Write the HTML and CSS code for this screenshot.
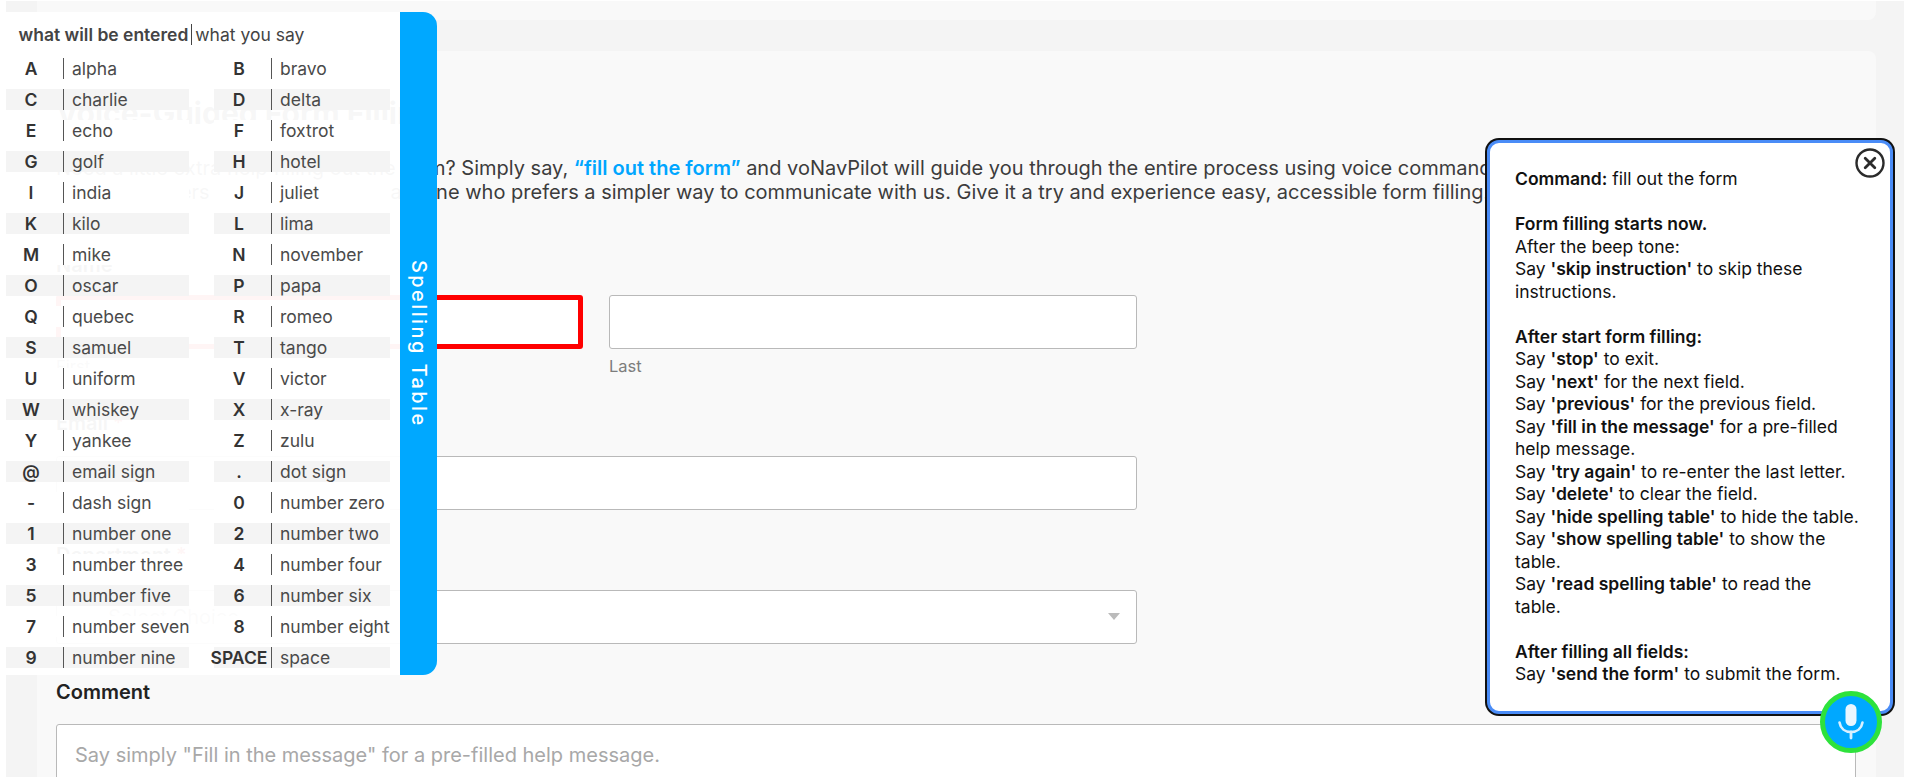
FILE: index.html
```html
<!DOCTYPE html>
<html>
<head>
	<title>Voice-Guided Form Filling</title>
	<meta charset="utf-8">
	<meta name="viewport" content="width=device-width, initial-scale=1">

	<link rel="stylesheet" href="styles.css">
</head>
<body>

	<div class="page">
		<div class="card card-top"></div>

		<div class="card card-form">
			<h2>Voice-Guided Form Filling</h2>
			<p class="intro">
				Need a little extra help filling out the form? Simply say, <a href="#">“fill out the form”</a> and voNavPilot will guide you through the entire process using voice commands.<br>
				Simple for users with disabilities or anyone who prefers a simpler way to communicate with us. Give it a try and experience easy, accessible form filling.
			</p>

			<form>
				<div class="field field-name">
					<label>Name</label>
					<div class="name-row">
						<div>
							<div class="input input-active"></div>
							<small>First</small>
						</div>
						<div>
							<div class="input"></div>
							<small>Last</small>
						</div>
					</div>
				</div>

				<div class="field field-email">
					<label>Email <span class="req">*</span></label>
					<div class="input input-half"></div>
				</div>

				<div class="field field-dept">
					<label>Department <span class="req">*</span></label>
					<div class="input input-half select">
						<span>Select Choice</span>
						<i class="select-arrow"></i>
					</div>
				</div>

				<div class="field field-comment">
					<label>Comment</label>
					<div class="textarea">Say simply "Fill in the message" for a pre-filled help message.</div>
				</div>
			</form>
		</div>
	</div>

	<div class="spelling">
		<div class="spelling-body">
			<div class="spelling-head"><b>what will be entered</b><span>what you say</span></div>
			<div class="spelling-table">
				<div class="row"><b>A</b><span>alpha</span></div>
				<div class="row"><b>B</b><span>bravo</span></div>
				<div class="row alt"><b>C</b><span>charlie</span></div>
				<div class="row alt"><b>D</b><span>delta</span></div>
				<div class="row"><b>E</b><span>echo</span></div>
				<div class="row"><b>F</b><span>foxtrot</span></div>
				<div class="row alt"><b>G</b><span>golf</span></div>
				<div class="row alt"><b>H</b><span>hotel</span></div>
				<div class="row"><b>I</b><span>india</span></div>
				<div class="row"><b>J</b><span>juliet</span></div>
				<div class="row alt"><b>K</b><span>kilo</span></div>
				<div class="row alt"><b>L</b><span>lima</span></div>
				<div class="row"><b>M</b><span>mike</span></div>
				<div class="row"><b>N</b><span>november</span></div>
				<div class="row alt"><b>O</b><span>oscar</span></div>
				<div class="row alt"><b>P</b><span>papa</span></div>
				<div class="row"><b>Q</b><span>quebec</span></div>
				<div class="row"><b>R</b><span>romeo</span></div>
				<div class="row alt"><b>S</b><span>samuel</span></div>
				<div class="row alt"><b>T</b><span>tango</span></div>
				<div class="row"><b>U</b><span>uniform</span></div>
				<div class="row"><b>V</b><span>victor</span></div>
				<div class="row alt"><b>W</b><span>whiskey</span></div>
				<div class="row alt"><b>X</b><span>x-ray</span></div>
				<div class="row"><b>Y</b><span>yankee</span></div>
				<div class="row"><b>Z</b><span>zulu</span></div>
				<div class="row alt"><b>@</b><span>email sign</span></div>
				<div class="row alt"><b>.</b><span>dot sign</span></div>
				<div class="row"><b>-</b><span>dash sign</span></div>
				<div class="row"><b>0</b><span>number zero</span></div>
				<div class="row alt"><b>1</b><span>number one</span></div>
				<div class="row alt"><b>2</b><span>number two</span></div>
				<div class="row"><b>3</b><span>number three</span></div>
				<div class="row"><b>4</b><span>number four</span></div>
				<div class="row alt"><b>5</b><span>number five</span></div>
				<div class="row alt"><b>6</b><span>number six</span></div>
				<div class="row"><b>7</b><span>number seven</span></div>
				<div class="row"><b>8</b><span>number eight</span></div>
				<div class="row alt"><b>9</b><span>number nine</span></div>
				<div class="row alt"><b>SPACE</b><span>space</span></div>
			</div>
		</div>
		<div class="spelling-tab"><span>Spelling Table</span></div>
	</div>

	<div class="popup">
		<button class="popup-close" aria-label="Close">
			<svg width="30" height="30" viewBox="0 0 30 30">
				<circle cx="15" cy="15" r="13.5" fill="none" stroke="#2b2b2b" stroke-width="2.4"/>
				<path d="M10.2 10.2l9.6 9.6M19.8 10.2l-9.6 9.6" fill="none" stroke="#2b2b2b" stroke-width="2.8" stroke-linecap="round"/>
			</svg>
		</button>
		<b>Command:</b> fill out the form<br>
		<br>
		<b>Form filling starts now.</b><br>
		After the beep tone:<br>
		Say <b>'skip instruction'</b> to skip these instructions.<br>
		<br>
		<b>After start form filling:</b><br>
		Say <b>'stop'</b> to exit.<br>
		Say <b>'next'</b> for the next field.<br>
		Say <b>'previous'</b> for the previous field.<br>
		Say <b>'fill in the message'</b> for a pre-filled help message.<br>
		Say <b>'try again'</b> to re-enter the last letter.<br>
		Say <b>'delete'</b> to clear the field.<br>
		Say <b>'hide spelling table'</b> to hide the table.<br>
		Say <b>'show spelling table'</b> to show the table.<br>
		Say <b>'read spelling table'</b> to read the table.<br>
		<br>
		<b>After filling all fields:</b><br>
		Say <b>'send the form'</b> to submit the form.
	</div>

	<button class="mic" aria-label="Microphone">
		<svg width="30" height="36" viewBox="0 0 30 36">
			<rect x="9.5" y="0" width="11" height="22" rx="5.5" fill="#eaf6ff"/>
			<path d="M3.5 18.5c1 6 5.5 9.5 11.5 9.5s10.500-3.500 11.500-9.500" fill="none" stroke="#d9f0ff" stroke-width="2.600" stroke-linecap="round"/>
			<path d="M15 28v6" fill="none" stroke="#d9f0ff" stroke-width="2.800" stroke-linecap="round"/>
		</svg>
	</button>

</body>
</html>
```

FILE: styles.css
```css
*,
*:before,
*:after {
	box-sizing: border-box;
}

html,
body {
	height: 100%;
}

body {
	background-color: #ffffff;
	color: #3c3c3c;
	font-family: "Inter", "Liberation Sans", sans-serif;
	font-size: 17.5px;
	margin: 0;
	overflow: hidden;
}

/* page behind the overlays */

.page {
	background-color: #f4f4f4;
	height: 776px;
	margin: 1px 15px 0 6px;
	overflow: hidden;
	padding: 0 28px 0 31px;
}

.card {
	background-color: #f9f9f9;
	border-radius: 8px;
}

.card-top {
	border-radius: 0 0 8px 8px;
	height: 19px;
	margin-bottom: 31px;
}

.card-form {
	height: 800px;
	padding: 44px 20px 0 19px;
}

h2 {
	color: #333333;
	font-size: 30px;
	font-weight: 700;
	line-height: 36px;
	margin: 0 0 25px;
}

.intro {
	font-size: 20px;
	line-height: 24.3px;
	margin: 0;
	white-space: nowrap;
}

.intro a {
	color: #00a6ff;
	font-weight: 600;
	text-decoration: none;
}

label {
	color: #222222;
	display: block;
	font-size: 20px;
	font-weight: 600;
	line-height: 24px;
}

.req {
	color: #e02020;
}

.field-name {
	margin-top: 48.4px;
}

.name-row {
	column-gap: 26px;
	display: grid;
	grid-template-columns: 527px 528px;
	margin-top: 18px;
}

.input {
	background-color: #ffffff;
	border: 1px solid #b9b9b9;
	border-radius: 3px;
	height: 54px;
}

.input-active {
	border: 5px solid #ff0000;
}

.input-half {
	width: 1081px;
}

small {
	color: #7d7d7d;
	display: block;
	font-size: 16.5px;
	line-height: 20px;
	margin-top: 7px;
}

.field-email {
	margin-top: 35px;
}

.field-email .input {
	margin-top: 21px;
}

.field-dept {
	margin-top: 33px;
}

.field-dept .input {
	margin-top: 23px;
}

.select {
	align-items: center;
	color: #9a9a9a;
	display: flex;
	font-size: 20px;
	justify-content: space-between;
	padding: 0 16px 0 51px;
}

.select-arrow {
	border-left: 6px solid transparent;
	border-right: 6px solid transparent;
	border-top: 7px solid #bbbbbb;
	height: 0;
	width: 0;
}

.field-comment {
	margin-top: 36px;
}

.textarea {
	background-color: #ffffff;
	border: 1px solid #b9b9b9;
	border-radius: 3px;
	color: #a8a8a8;
	font-size: 20px;
	height: 120px;
	line-height: 24px;
	margin-top: 20px;
	padding: 18px 18px;
}

/* spelling table drawer */

.spelling {
	display: flex;
	height: 663px;
	left: 6px;
	position: absolute;
	top: 12px;
	width: 431px;
}

.spelling-body {
	background-color: rgba(255, 255, 255, 0.96);
	padding-top: 12px;
	width: 394px;
}

.spelling-head {
	color: #444444;
	display: flex;
	line-height: 21px;
	padding-left: 12.5px;
}

.spelling-head b {
	border-right: 1px solid #444444;
	font-weight: 600;
	margin-right: 3px;
	padding-right: 3px;
	white-space: nowrap;
}

.spelling-table {
	column-gap: 25px;
	display: grid;
	grid-template-columns: 183px 176px;
	margin-top: 13px;
	row-gap: 10px;
}

.row {
	align-items: center;
	background-color: #ffffff;
	display: flex;
	height: 21px;
}

.row.alt {
	background-color: #f4f4f4;
}

.row b {
	color: #333333;
	display: flex;
	flex: none;
	font-weight: 600;
	justify-content: center;
	margin-right: 7px;
	width: 50px;
}

.row span {
	border-left: 1px solid #555555;
	color: #4a4a4a;
	flex: 1;
	line-height: 21px;
	padding-left: 8px;
	white-space: nowrap;
}

.spelling-tab {
	align-items: center;
	background-color: #00a8ff;
	border-radius: 0 14px 14px 0;
	color: #ffffff;
	display: flex;
	font-size: 20px;
	font-weight: 500;
	justify-content: center;
	letter-spacing: 2.4px;
	width: 37px;
}

.spelling-tab span {
	writing-mode: vertical-rl;
}

/* command popup */

.popup {
	background-color: #ffffff;
	border: 3px solid #4a8cf7;
	border-radius: 12px;
	box-shadow: 0 0 0 2px #111111;
	color: #111111;
	height: 574px;
	left: 1487px;
	line-height: 22.5px;
	padding: 25px 29.5px 0 25px;
	position: absolute;
	top: 140px;
	width: 406px;
}

.popup b {
	font-weight: 600;
}

.popup-close {
	background: none;
	border: 0;
	display: block;
	height: 30px;
	padding: 0;
	position: absolute;
	right: 5px;
	top: 5px;
	width: 30px;
}

.mic {
	align-items: center;
	background-color: #00a8ff;
	border: 5px solid #2ee23c;
	border-radius: 50%;
	display: flex;
	height: 62px;
	justify-content: center;
	left: 1820px;
	padding: 0;
	position: absolute;
	top: 691px;
	width: 62px;
}
```
